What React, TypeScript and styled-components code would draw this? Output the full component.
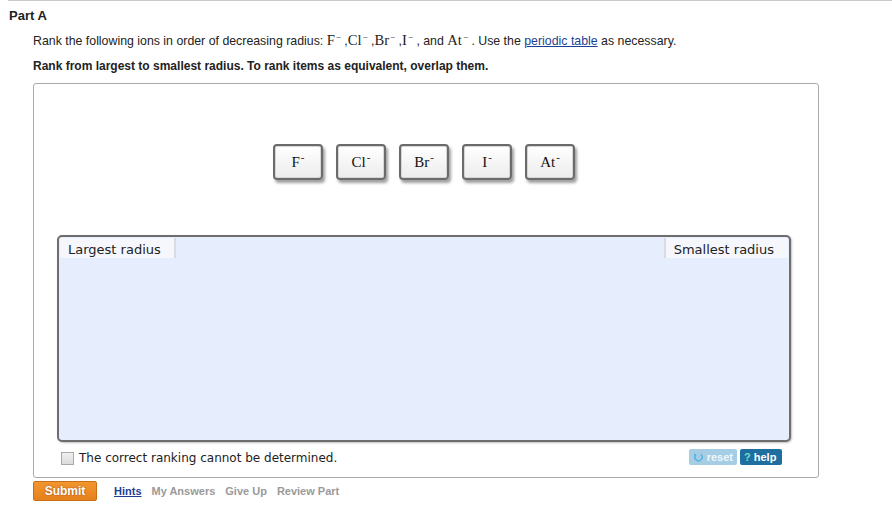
import React from 'react';
import styled, { createGlobalStyle } from 'styled-components';

const GlobalStyle = createGlobalStyle`
  html, body {
    margin: 0;
    padding: 0;
    background: #fff;
  }
  body {
    font-family: "Liberation Sans", Arial, sans-serif;
    color: #222;
  }
`;

const ions = ['F', 'Cl', 'Br', 'I', 'At'];

const Formula = ({ base }: { base: string }) => (
    <Chem>
        {base}
        <ChemCharge>−</ChemCharge>
    </Chem>
);

const App = () => {
    return (
        <>
            <GlobalStyle />
            <Page>
                <TopRule />
                <PartTitle>Part A</PartTitle>
                <Prompt>
                    Rank the following ions in order of decreasing radius: <Formula base="F" /> ,
                    <Formula base="Cl" /> ,<Formula base="Br" /> ,<Formula base="I" /> , and{' '}
                    <Formula base="At" /> . Use the <PromptLink href="#">periodic table</PromptLink> as necessary.
                </Prompt>
                <Directions>Rank from largest to smallest radius. To rank items as equivalent, overlap them.</Directions>

                <AnswerBox>
                    <TileRow>
                        {ions.map((ion) => (
                            <Tile key={ion}>
                                {ion}
                                <TileCharge>-</TileCharge>
                            </Tile>
                        ))}
                    </TileRow>

                    <RankArea>
                        <RankHeader>
                            <EndLabel side="left">Largest radius</EndLabel>
                            <EndLabel side="right">Smallest radius</EndLabel>
                        </RankHeader>
                    </RankArea>

                    <BoxFooter>
                        <CheckLabel>
                            <CheckBox />
                            The correct ranking cannot be determined.
                        </CheckLabel>
                        <ToolButtons>
                            <ResetButton>
                                <ResetIcon viewBox="0 0 12 12">
                                    <path d="M3 3.2A4 4 0 1 0 8.8 2.6" fill="none" stroke="#4db1e2" strokeWidth="1.5" />
                                    <path d="M1.6 1.2L4.2 3.6L1.4 4.6Z" fill="#4db1e2" />
                                </ResetIcon>
                                reset
                            </ResetButton>
                            <HelpButton>
                                <HelpMark>?</HelpMark> help
                            </HelpButton>
                        </ToolButtons>
                    </BoxFooter>
                </AnswerBox>

                <ActionBar>
                    <SubmitButton>Submit</SubmitButton>
                    <ActionLink active>Hints</ActionLink>
                    <ActionLink>My Answers</ActionLink>
                    <ActionLink>Give Up</ActionLink>
                    <ActionLink>Review Part</ActionLink>
                </ActionBar>
            </Page>
        </>
    );
};

export default App;

const Page = styled.div`
  width: 892px;
  height: 510px;
  overflow: hidden;
`;

const TopRule = styled.div`
  height: 1px;
  margin-left: 8px;
  background-color: #c9c9c9;
`;

const PartTitle = styled.div`
  margin: 7px 0 0 9px;
  font-size: 13px;
  font-weight: 700;
  line-height: 16px;
  color: #222;
`;

const Prompt = styled.div`
  margin: 7px 0 0 33px;
  font-size: 12.35px;
  line-height: 18px;
  color: #222;
`;

const Chem = styled.span`
  font-family: "Liberation Serif", "Times New Roman", serif;
  font-size: 14.6px;
`;

const ChemCharge = styled.sup`
  font-size: 9px;
  vertical-align: 5px;
  line-height: 0;
  margin-left: 1px;
`;

const PromptLink = styled.a`
  color: #1c3f94;
  text-decoration: underline;
`;

const Directions = styled.div`
  margin: 9px 0 0 33px;
  font-size: 12px;
  font-weight: 700;
  line-height: 14px;
  color: #222;
`;

const AnswerBox = styled.div`
  box-sizing: border-box;
  margin: 10px 0 0 33px;
  width: 786px;
  height: 395px;
  border: 1px solid #aaa;
  border-radius: 3px;
  padding: 60px 27px 0 23px;
  display: flex;
  flex-direction: column;
`;

const TileRow = styled.div`
  display: flex;
  justify-content: center;
  gap: 13px;
`;

const Tile = styled.div`
  box-sizing: border-box;
  width: 50px;
  height: 36px;
  border: 2px solid #6b6b6b;
  border-radius: 4px;
  background: linear-gradient(#ffffff, #ececec);
  box-shadow: inset 0 0 0 1px #d6d6d6, 2px 3px 3px rgba(0, 0, 0, 0.38);
  display: flex;
  align-items: center;
  justify-content: center;
  font-family: "Liberation Serif", "Times New Roman", serif;
  font-size: 15px;
  color: #111;
`;

const TileCharge = styled.span`
  font-size: 11px;
  align-self: flex-start;
  margin-top: 5px;
  margin-left: 1px;
`;

const RankArea = styled.div`
  box-sizing: border-box;
  margin-top: 55px;
  width: 734px;
  height: 207px;
  border: 2px solid #6e6e6e;
  border-radius: 5px;
  background-color: #e6edfc;
  box-shadow: 1px 1px 2px rgba(0, 0, 0, 0.25);
  padding: 1px;
`;

const RankHeader = styled.div`
  display: flex;
  justify-content: space-between;
`;

const EndLabel = styled.div<{ side: 'left' | 'right' }>`
  height: 20px;
  padding: 0 ${({ side }) => (side === 'left' ? '13px 0 8px' : '14px 0 8px')};
  background-color: #f5f7fd;
  border-${({ side }) => (side === 'left' ? 'right' : 'left')}: 2px solid #d8dbe2;
  font-family: "DejaVu Sans", Verdana, sans-serif;
  font-size: 13px;
  line-height: 23px;
  color: #222;
`;

const BoxFooter = styled.div`
  display: flex;
  justify-content: space-between;
  align-items: flex-start;
  margin-top: 7px;
  width: 725px;
`;

const CheckLabel = styled.label`
  display: flex;
  align-items: center;
  gap: 5px;
  margin-top: 2px;
  padding-left: 4px;
  font-family: "DejaVu Sans", Verdana, sans-serif;
  font-size: 12px;
  color: #222;
`;

const CheckBox = styled.span`
  box-sizing: border-box;
  width: 13px;
  height: 13px;
  border: 1px solid #a9a9a9;
  background: linear-gradient(#f0f0f0, #dcdcdc);
`;

const ToolButtons = styled.div`
  display: flex;
  gap: 3px;
`;

const ToolButton = styled.div`
  height: 16px;
  display: flex;
  align-items: center;
  gap: 3px;
  padding: 0 4px;
  border-radius: 2px;
  font-size: 11px;
  font-weight: 700;
  color: #fff;
`;

const ResetButton = styled(ToolButton)`
  width: 48px;
  box-sizing: border-box;
  background-color: #a5cde4;
  color: #eef7fc;
`;

const ResetIcon = styled.svg`
  width: 11px;
  height: 11px;
`;

const HelpButton = styled(ToolButton)`
  width: 42px;
  box-sizing: border-box;
  background-color: #1e6e9f;
  gap: 0;
`;

const HelpMark = styled.span`
  color: #6fe0c8;
  margin-right: 3px;
`;

const ActionBar = styled.div`
  display: flex;
  align-items: center;
  margin: 3px 0 0 33px;
`;

const SubmitButton = styled.div`
  box-sizing: border-box;
  width: 64px;
  height: 20px;
  border: 1px solid #c96f16;
  border-radius: 2px;
  background: linear-gradient(#f3962f, #e5811c);
  color: #fff;
  font-size: 12px;
  font-weight: 700;
  line-height: 18px;
  text-align: center;
  text-shadow: 0 0 2px rgba(120, 50, 0, 0.7);
  margin-right: 17px;
`;

const ActionLink = styled.a<{ active?: boolean }>`
  margin-right: 10px;
  font-size: 11px;
  font-weight: 700;
  color: ${({ active }) => (active ? '#1c3f94' : '#9a9a9a')};
  text-decoration: ${({ active }) => (active ? 'underline' : 'none')};
`;
